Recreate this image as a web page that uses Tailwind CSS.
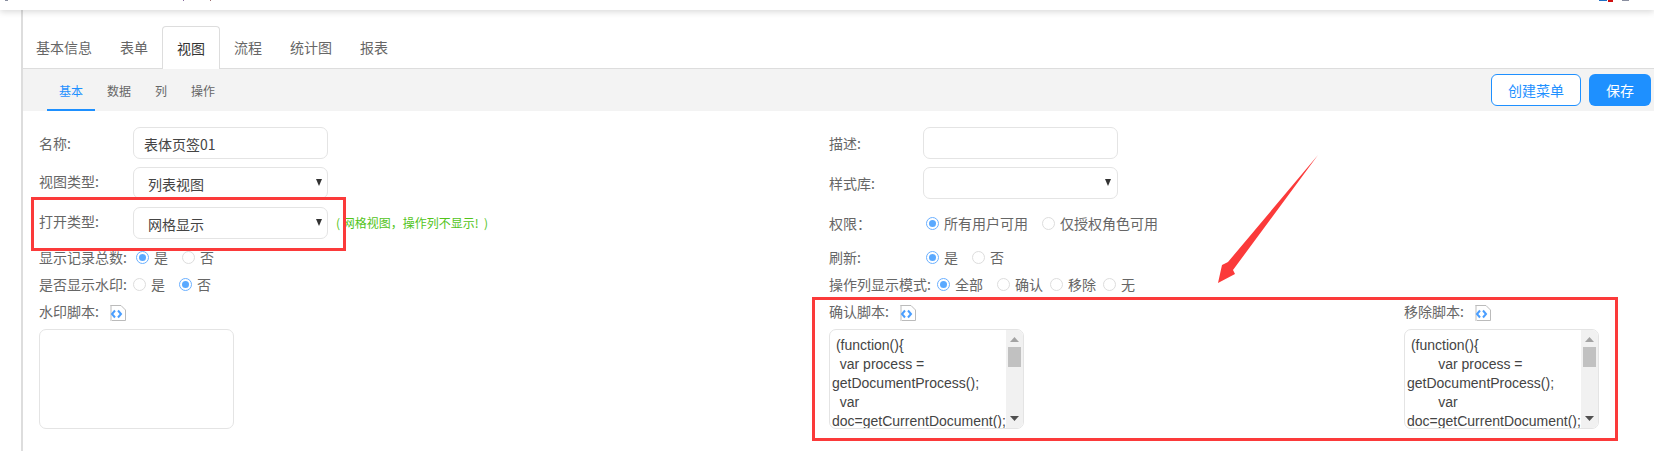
<!DOCTYPE html>
<html lang="zh">
<head>
  <meta charset="UTF-8" />
  <title>视图</title>
  <script src="https://cdn.jsdelivr.net/npm/@tailwindcss/browser@4"></script>
</head>
<body class="relative w-[1654px] h-[451px] overflow-hidden bg-white text-[14px] text-[#666] font-['Noto_Sans_CJK_SC','Liberation_Sans',sans-serif]">
  <!-- top bar, only the bottom edge of the window above is visible -->
  <div class="relative z-10 h-[10px] bg-white shadow-[0_2px_6px_rgba(0,0,0,0.15)]">
    <span class="absolute left-[5px] top-0 w-[3px] h-px bg-[#8a8fa0]"></span>
    <span class="absolute left-[183px] top-0 w-px h-px bg-[#8a6fa0]"></span>
    <span class="absolute left-[210px] top-0 w-px h-px bg-[#a06f6f]"></span>
    <span class="absolute left-[1599px] top-0 w-[8px] h-px bg-[#1f6fc4]"></span>
    <span class="absolute left-[1608px] top-0 w-[5px] h-[2px] bg-[#d01010]"></span>
    <span class="absolute left-[1622px] top-0 w-[7px] h-px bg-[#8a8fa0]"></span>
  </div>

  <div class="flex h-[441px]">
    <div class="w-[23px] shrink-0 border-r-2 border-[#ddd]"></div>

    <div class="flex-1 min-w-0">
      <!-- main tabs -->
      <div class="flex h-[59px] pt-4 items-stretch border-b border-[#ddd]">
        <div class="pl-[13px] pr-[14px] leading-[42px]">基本信息</div>
        <div class="px-[14px] leading-[42px]">表单</div>
        <div class="w-[58px] h-[43px] text-center leading-[42px] text-[#333] bg-white border border-b-0 border-[#ddd] rounded-t-[4px]">视图</div>
        <div class="px-[14px] leading-[42px]">流程</div>
        <div class="px-[14px] leading-[42px]">统计图</div>
        <div class="px-[14px] leading-[42px]">报表</div>
      </div>

      <!-- sub tabs -->
      <div class="flex h-[42px] bg-[#f3f3f3] pl-6 pr-[3px] text-[12px]">
        <div class="w-[48px] text-center leading-[44px] text-[#1e90ff] border-b-2 border-[#1e90ff]">基本</div>
        <div class="w-[48px] text-center leading-[44px]">数据</div>
        <div class="w-[36px] text-center leading-[44px]">列</div>
        <div class="w-[48px] text-center leading-[44px]">操作</div>
        <div class="ml-auto flex gap-2 items-start pt-[5px] text-[14px]">
          <div class="w-[90px] h-[32px] leading-[30px] text-center text-[#1e90ff] bg-white border border-[#1e90ff] rounded-[6px]">创建菜单</div>
          <div class="w-[62px] h-[32px] leading-[32px] text-center text-white bg-[#1e90ff] rounded-[6px]">保存</div>
        </div>
      </div>

      <!-- form -->
      <div class="flex pl-4 pt-4">
        <!-- left column -->
        <div class="w-[790px] shrink-0">
          <div class="flex h-[32px] items-center mb-2"><div class="w-[94px]">名称:</div><div class="w-[195px] h-[32px] px-[10px] leading-[32px] text-[#444] border border-[#e4e4e4] rounded-[7px]">表体页签01</div></div>
          <div class="flex h-[32px] items-center mb-2"><div class="w-[94px] -mt-[4px]">视图类型:</div><div class="relative w-[195px] h-[32px] pl-[14px] leading-[33px] text-[#444] border border-[#e4e4e4] rounded-[7px]">列表视图<svg class="absolute right-[5px] top-[11px]" width="6" height="7" viewBox="0 0 6 7"><path d="M0 0H6L3 7Z" fill="#333"/></svg></div></div>
          <div class="flex h-[32px] items-center"><div class="w-[94px] -mt-[3px]">打开类型:</div><div class="relative w-[195px] h-[32px] pl-[14px] leading-[33px] text-[#444] border border-[#e4e4e4] rounded-[7px]">网格显示<svg class="absolute right-[5px] top-[11px]" width="6" height="7" viewBox="0 0 6 7"><path d="M0 0H6L3 7Z" fill="#333"/></svg></div><div class="ml-[8px] text-[12px] text-[#52c41a] whitespace-pre">( 网格视图<span class="font-['Noto_Sans_CJK_TC']">，</span>操作列不显示!  )</div></div>
          <div class="flex h-[20px] items-center mt-2">
            <div class="w-[97px]">显示记录总数:</div>
            <span class="w-[13px] h-[13px] rounded-full border border-[#6ab0ff] flex items-center justify-center"><span class="w-[7px] h-[7px] rounded-full bg-[#5aa9ff]"></span></span><span class="ml-[5px] w-[28px]">是</span>
            <span class="w-[13px] h-[13px] rounded-full border border-[#ddd]"></span><span class="ml-[5px]">否</span>
          </div>
          <div class="flex h-[20px] items-center mt-[7px]">
            <div class="w-[94px]">是否显示水印:</div>
            <span class="w-[13px] h-[13px] rounded-full border border-[#ddd]"></span><span class="ml-[5px] w-[28px]">是</span>
            <span class="w-[13px] h-[13px] rounded-full border border-[#6ab0ff] flex items-center justify-center"><span class="w-[7px] h-[7px] rounded-full bg-[#5aa9ff]"></span></span><span class="ml-[5px]">否</span>
          </div>
          <div class="flex h-[20px] items-center mt-[7px]">
            <div class="w-[71px]">水印脚本:</div>
            <svg class="mt-1" width="16" height="16" viewBox="0 0 16 16"><path d="M.5.5H11L15.5 5V15.500H.5Z" fill="#fff" stroke="#bbb"/><path d="M0 1H2V16H0Z" fill="#ddd"/><path d="M4 5.500L1 9L4 12.500M7 5.500L10 9L7 12.500" transform="translate(1 0)" fill="none" stroke="#4a9eff" stroke-width="2"/></svg>
          </div>
          <div class="w-[195px] h-[100px] mt-2 border border-[#e4e4e4] rounded-[7px]"></div>
        </div>

        <!-- right column -->
        <div class="flex-1 min-w-0">
          <div class="flex h-[32px] items-center mb-2"><div class="w-[94px]">描述:</div><div class="w-[195px] h-[32px] border border-[#e4e4e4] rounded-[7px]"></div></div>
          <div class="flex h-[32px] items-center mb-2"><div class="w-[94px]">样式库:</div><div class="relative w-[195px] h-[32px] border border-[#e4e4e4] rounded-[7px]"><svg class="absolute right-[6px] top-[11px]" width="6" height="7" viewBox="0 0 6 7"><path d="M0 0H6L3 7Z" fill="#333"/></svg></div></div>
          <div class="flex h-[32px] items-center">
            <div class="w-[97px]">权限<span class="font-['Noto_Sans_CJK_TC']">：</span></div>
            <span class="w-[13px] h-[13px] rounded-full border border-[#6ab0ff] flex items-center justify-center"><span class="w-[7px] h-[7px] rounded-full bg-[#5aa9ff]"></span></span><span class="ml-[5px] w-[98px]">所有用户可用</span>
            <span class="w-[13px] h-[13px] rounded-full border border-[#ddd]"></span><span class="ml-[5px]">仅授权角色可用</span>
          </div>
          <div class="flex h-[20px] items-center mt-2">
            <div class="w-[97px]">刷新:</div>
            <span class="w-[13px] h-[13px] rounded-full border border-[#6ab0ff] flex items-center justify-center"><span class="w-[7px] h-[7px] rounded-full bg-[#5aa9ff]"></span></span><span class="ml-[5px] w-[28px]">是</span>
            <span class="w-[13px] h-[13px] rounded-full border border-[#ddd]"></span><span class="ml-[5px]">否</span>
          </div>
          <div class="flex h-[20px] items-center mt-[7px]">
            <div class="w-[108px]">操作列显示模式:</div>
            <span class="w-[13px] h-[13px] rounded-full border border-[#6ab0ff] flex items-center justify-center"><span class="w-[7px] h-[7px] rounded-full bg-[#5aa9ff]"></span></span><span class="ml-[5px] w-[42px]">全部</span>
            <span class="w-[13px] h-[13px] rounded-full border border-[#ddd]"></span><span class="ml-[5px] w-[35px]">确认</span>
            <span class="w-[13px] h-[13px] rounded-full border border-[#ddd]"></span><span class="ml-[5px] w-[35px]">移除</span>
            <span class="w-[13px] h-[13px] rounded-full border border-[#ddd]"></span><span class="ml-[5px]">无</span>
          </div>

          <div class="flex mt-[7px]">
            <div class="w-[575px] shrink-0">
              <div class="flex h-[20px] items-center">
                <div class="w-[71px]">确认脚本:</div>
                <svg class="mt-1" width="16" height="16" viewBox="0 0 16 16"><path d="M.5.5H11L15.5 5V15.500H.5Z" fill="#fff" stroke="#bbb"/><path d="M0 1H2V16H0Z" fill="#ddd"/><path d="M4 5.500L1 9L4 12.500M7 5.500L10 9L7 12.500" transform="translate(1 0)" fill="none" stroke="#4a9eff" stroke-width="2"/></svg>
              </div>
              <div class="relative w-[195px] h-[100px] mt-2 pl-[2px] pr-[17px] pt-[6px] overflow-hidden leading-[19px] text-[#444] border border-[#e4e4e4] rounded-[7px] font-['Liberation_Sans',sans-serif]">
                <div class="whitespace-pre-wrap"> (function(){
  var process = getDocumentProcess();
  var doc=getCurrentDocument();</div>
                <div class="absolute right-0 top-0 bottom-0 w-[17px] bg-[#f1f1f1]">
                  <svg class="absolute left-[4px] top-[7px]" width="9" height="5" viewBox="0 0 9 5"><path d="M0 5L4.500 0L9 5Z" fill="#a3a3a3"/></svg>
                  <div class="absolute left-[2px] top-[17px] w-[13px] h-[20px] bg-[#c1c1c1]"></div>
                  <svg class="absolute left-[4px] bottom-[7px]" width="9" height="5" viewBox="0 0 9 5"><path d="M0 0L4.500 5L9 0Z" fill="#505050"/></svg>
                </div>
              </div>
            </div>
            <div class="w-[195px] shrink-0">
              <div class="flex h-[20px] items-center">
                <div class="w-[71px]">移除脚本:</div>
                <svg class="mt-1" width="16" height="16" viewBox="0 0 16 16"><path d="M.5.5H11L15.5 5V15.500H.5Z" fill="#fff" stroke="#bbb"/><path d="M0 1H2V16H0Z" fill="#ddd"/><path d="M4 5.500L1 9L4 12.500M7 5.500L10 9L7 12.500" transform="translate(1 0)" fill="none" stroke="#4a9eff" stroke-width="2"/></svg>
              </div>
              <div class="relative w-[195px] h-[100px] mt-2 pl-[2px] pr-[17px] pt-[6px] overflow-hidden leading-[19px] text-[#444] border border-[#e4e4e4] rounded-[7px] font-['Liberation_Sans',sans-serif]">
                <div class="whitespace-pre-wrap"> (function(){
        var process = getDocumentProcess();
        var doc=getCurrentDocument();</div>
                <div class="absolute right-0 top-0 bottom-0 w-[17px] bg-[#f1f1f1]">
                  <svg class="absolute left-[4px] top-[7px]" width="9" height="5" viewBox="0 0 9 5"><path d="M0 5L4.500 0L9 5Z" fill="#a3a3a3"/></svg>
                  <div class="absolute left-[2px] top-[17px] w-[13px] h-[20px] bg-[#c1c1c1]"></div>
                  <svg class="absolute left-[4px] bottom-[7px]" width="9" height="5" viewBox="0 0 9 5"><path d="M0 0L4.500 5L9 0Z" fill="#505050"/></svg>
                </div>
              </div>
            </div>
          </div>
        </div>
      </div>
    </div>
  </div>

  <!-- red annotations drawn over the page -->
  <div class="absolute left-[31px] top-[197px] w-[315px] h-[54px] border-[3px] border-[#fb3a3a]"></div>
  <div class="absolute left-[812px] top-[297px] w-[806px] h-[144px] border-[3px] border-[#fb3a3a]"></div>
  <svg class="absolute left-0 top-0" width="1654" height="451" viewBox="0 0 1654 451"><path d="M1318 155L1228 262L1222 265L1218 283L1235 274L1233 270Z" fill="#fb3a3a"/></svg>
</body>
</html>
